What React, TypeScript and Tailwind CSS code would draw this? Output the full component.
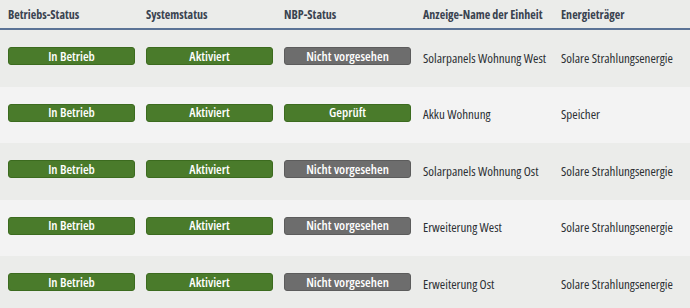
import React from 'react';

type Row = {
  betrieb: string;
  system: string;
  nbp: string;
  nbpOk: boolean;
  name: string;
  energie: string;
};

const rows: Row[] = [
  { betrieb: 'In Betrieb', system: 'Aktiviert', nbp: 'Nicht vorgesehen', nbpOk: false, name: 'Solarpanels Wohnung West', energie: 'Solare Strahlungsenergie' },
  { betrieb: 'In Betrieb', system: 'Aktiviert', nbp: 'Geprüft', nbpOk: true, name: 'Akku Wohnung', energie: 'Speicher' },
  { betrieb: 'In Betrieb', system: 'Aktiviert', nbp: 'Nicht vorgesehen', nbpOk: false, name: 'Solarpanels Wohnung Ost', energie: 'Solare Strahlungsenergie' },
  { betrieb: 'In Betrieb', system: 'Aktiviert', nbp: 'Nicht vorgesehen', nbpOk: false, name: 'Erweiterung West', energie: 'Solare Strahlungsenergie' },
  { betrieb: 'In Betrieb', system: 'Aktiviert', nbp: 'Nicht vorgesehen', nbpOk: false, name: 'Erweiterung Ost', energie: 'Solare Strahlungsenergie' },
];

const headers = ['Betriebs-Status', 'Systemstatus', 'NBP-Status', 'Anzeige-Name der Einheit', 'Energieträger'];

// status pill, green for ok states, gray for "Nicht vorgesehen"
const Badge = ({ label, ok = true }: { label: string; ok?: boolean }) => (
  <div
    className={
      'w-[127px] h-[18px] -mt-[4px] rounded-[3px] border flex items-center justify-center text-[13px] font-semibold text-white leading-none ' +
      (ok ? 'bg-[#4a7b2b] border-[#3c6b1f]' : 'bg-[#6d6d6d] border-[#5c5c5c]')
    }
  >
    {label}
  </div>
);

const App = () => {
  return (
    <div className="w-[690px] h-[308px] overflow-hidden bg-[#ebecea] text-[#2b2f33] text-[13px] whitespace-nowrap font-['Open_Sans',sans-serif] [font-stretch:condensed]">
      <div className="grid grid-cols-[138px_138px_139px_138px_1fr] h-[30px] items-center border-b-2 border-[#5b7396]">
        {headers.map((h) => (
          <div key={h} className="pl-2 text-[12px] font-bold text-[#3a4350] pt-[1px]">{h}</div>
        ))}
      </div>
      {rows.map((r, i) => (
        <div
          key={i}
          className={
            'grid grid-cols-[138px_138px_139px_138px_1fr] h-[56.5px] items-center ' +
            (i % 2 === 0 ? 'bg-[#ebecea]' : 'bg-[#f3f3f3]')
          }
        >
          <div className="pl-2"><Badge label={r.betrieb} /></div>
          <div className="pl-2"><Badge label={r.system} /></div>
          <div className="pl-2"><Badge label={r.nbp} ok={r.nbpOk} /></div>
          <div className="pl-2">{r.name}</div>
          <div className="pl-2">{r.energie}</div>
        </div>
      ))}
    </div>
  );
};

export default App;
